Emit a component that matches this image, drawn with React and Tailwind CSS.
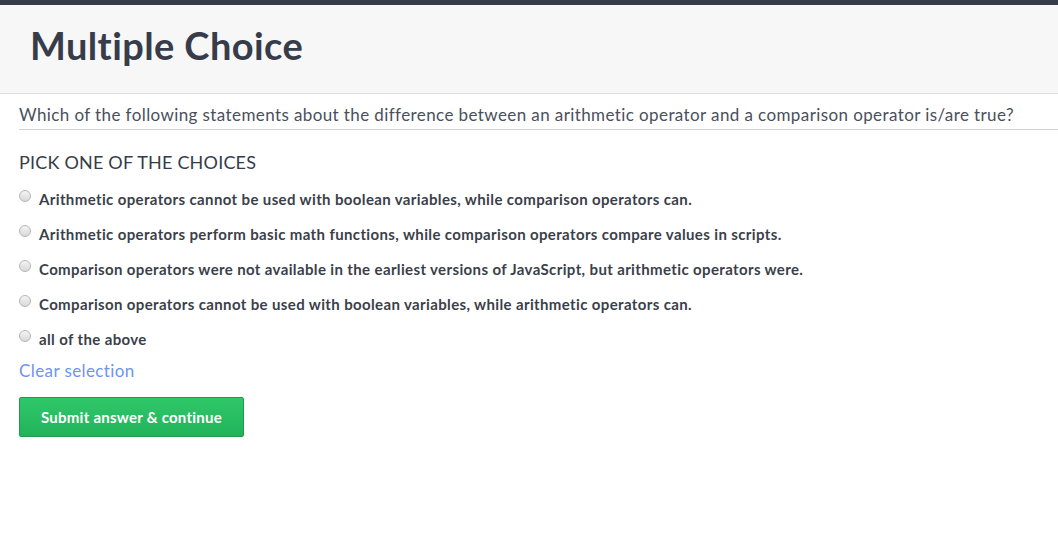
import { useState } from "react"

const choices = [
  "Arithmetic operators cannot be used with boolean variables, while comparison operators can.",
  "Arithmetic operators perform basic math functions, while comparison operators compare values in scripts.",
  "Comparison operators were not available in the earliest versions of JavaScript, but arithmetic operators were.",
  "Comparison operators cannot be used with boolean variables, while arithmetic operators can.",
  "all of the above",
]

export default function App() {
  const [selected, setSelected] = useState(null)

  return (
    <div className="min-h-[537px] bg-white font-['Lato','Open_Sans',sans-serif] [font-variant-ligatures:none] text-[#3d4351]">
      <div className="h-[5px] bg-[#363c4a]" />
      <div className="h-[89px] bg-[#f7f7f7] border-b border-[#dedede] px-[30px] flex items-center">
        <h1 className="text-[38px] font-bold tracking-[0.4px] text-[#363c4a] leading-none -mt-[8px]">Multiple Choice</h1>
      </div>

      <div className="pl-[19px]">
        <p className="text-[17px] tracking-[0.4px] text-[#4a4f5c] leading-none pt-[12px] pb-[6px] border-b border-[#d2d2d2]">
          Which of the following statements about the difference between an arithmetic operator and a comparison operator is/are true?
        </p>

        <h2 className="text-[18px] tracking-[0.2px] uppercase text-[#363c4a] leading-none mt-[23px]">Pick one of the choices</h2>

        <div className="mt-[21px] flex flex-col gap-[20px]">
          {choices.map((c, i) => (
            <label key={i} className="flex items-start gap-[8px] cursor-pointer">
              <span
                onClick={() => setSelected(i)}
                className="mt-[-2px] w-[12px] h-[12px] rounded-full border border-[#b5b5b5] bg-gradient-to-b from-[#f4f4f4] to-[#d9d9d9] shrink-0"
              />
              <span className="text-[15px] tracking-[0.37px] font-bold text-[#3b3f4a] leading-none">{c}</span>
            </label>
          ))}
        </div>

        <a className="block mt-[15px] text-[17px] tracking-[0.4px] text-[#6c95f0] leading-none cursor-pointer" onClick={() => setSelected(null)}>
          Clear selection
        </a>

        <button className="mt-[18px] w-[225px] h-[40px] rounded-[2px] border border-[#1e9a48] bg-gradient-to-b from-[#2fc76a] to-[#22b35a] text-white text-[15px] tracking-[0.25px] font-bold leading-none">
          Submit answer &amp; continue
        </button>
      </div>
    </div>
  )
}
